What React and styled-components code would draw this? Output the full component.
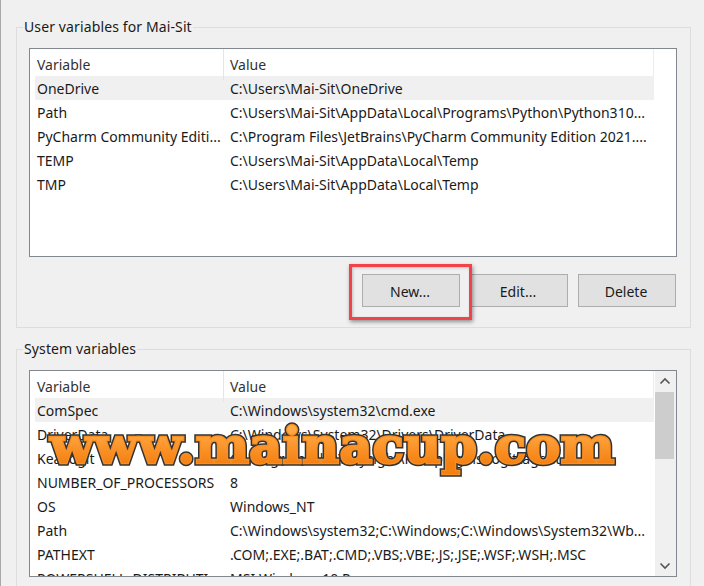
import styled, { createGlobalStyle } from 'styled-components'

const GlobalStyle = createGlobalStyle`
  html,
  body {
    margin: 0;
    height: 586px;
    overflow: hidden;
    background: #f0f0f0;
  }
`

const Page = styled.div`
  position: relative;
  width: 704px;
  height: 586px;
  overflow: hidden;
  padding: 19px 13px 0 16px;
  box-sizing: border-box;
  font-family: 'Noto Sans', 'Open Sans', sans-serif;
  font-size: 14px;
  color: #1a1a1a;
`

const WindowEdge = styled.div`
  position: absolute;
  left: 0;
  top: 0;
  bottom: 0;
  width: 1px;
  background: #a8a8a8;
`

const Group = styled.fieldset`
  margin: 0 0 ${(p) => p.$gap || 0}px;
  padding: ${(p) => p.$top}px 13px 0 12px;
  height: ${(p) => p.$height}px;
  box-sizing: border-box;
  border: 1px solid #dddddd;
  min-width: 0;
`

const Legend = styled.legend`
  margin-left: -6px;
  padding: 0 1px;
  font-size: 14px;
  line-height: 16px;
  letter-spacing: 0.12px;
`

const ListBox = styled.div`
  position: relative;
  height: ${(p) => p.$height}px;
  box-sizing: border-box;
  border: 1px solid #828790;
  background: #fff;
  overflow: hidden;
`

const HeaderRow = styled.div`
  display: grid;
  grid-template-columns: 189px 430px;
  margin-left: 5px;
  height: 27px;
  width: 619px;
  border-right: 1px solid #ececec;
  box-sizing: border-box;
`

const HeaderCell = styled.div`
  padding-left: ${(p) => (p.$last ? 6 : 2)}px;
  line-height: 31px;
  color: #333;
  border-right: ${(p) => (p.$last ? 'none' : '1px solid #e5e5e5')};
`

const Row = styled.div`
  display: grid;
  grid-template-columns: 193px 426px;
  width: 619px;
  margin-left: 5px;
  height: 24px;
  line-height: 26px;
  background: ${(p) => (p.$selected ? '#f0f0f0' : 'transparent')};
`

const Cell = styled.div`
  padding-left: 2px;
  white-space: nowrap;
  overflow: hidden;
`

const Buttons = styled.div`
  display: flex;
  justify-content: flex-end;
  gap: 10px;
  margin-top: 17px;
  padding-right: 1px;
`

const Button = styled.button`
  width: 98px;
  height: 33px;
  padding: 2px 2px 0 0;
  border: 1px solid #adadad;
  background: #e1e1e1;
  font: inherit;
  color: #1a1a1a;
`

const Highlight = styled.div`
  position: absolute;
  left: 349px;
  top: 264px;
  width: 123px;
  height: 56px;
  box-sizing: border-box;
  border: 3px solid #f2434a;
  box-shadow: 1px 2px 4px rgba(0, 0, 0, 0.4), inset 1px 1px 3px rgba(0, 0, 0, 0.2);
`

const Scrollbar = styled.div`
  position: absolute;
  right: 0;
  top: 0;
  bottom: 0;
  width: 21px;
  background: #f0f0f0;
  display: flex;
  flex-direction: column;
  align-items: center;
  justify-content: space-between;
`

const ScrollArrow = styled.svg`
  width: 21px;
  height: 20px;
  flex: none;
`

const ScrollThumb = styled.div`
  position: absolute;
  top: 21px;
  left: 0;
  width: 19px;
  height: 67px;
  background: #cdcdcd;
`

const Watermark = styled.div`
  position: absolute;
  left: 50px;
  top: 415px;
  font-family: 'DejaVu Serif', 'Liberation Serif', serif;
  font-weight: 900;
  font-size: 51px;
  line-height: 60px;
  letter-spacing: 0.2px;
  white-space: nowrap;

  &::before {
    content: attr(data-text);
    position: absolute;
    left: 0;
    top: 0;
    color: #333;
    -webkit-text-stroke: 5.5px #333;
  }

  &::after {
    content: attr(data-text);
    position: absolute;
    left: 0;
    top: 0;
    color: #f88f22;
    -webkit-text-stroke: 2.5px #f88f22;
  }
`

const WatermarkFill = styled.span`
  position: relative;
  z-index: 1;
  background: linear-gradient(180deg, #ffab45 25%, #f58012 80%);
  -webkit-background-clip: text;
  background-clip: text;
  color: transparent;
`

const userVars = [
  ['OneDrive', 'C:\\Users\\Mai-Sit\\OneDrive'],
  ['Path', 'C:\\Users\\Mai-Sit\\AppData\\Local\\Programs\\Python\\Python310...'],
  ['PyCharm Community Editi...', 'C:\\Program Files\\JetBrains\\PyCharm Community Edition 2021....'],
  ['TEMP', 'C:\\Users\\Mai-Sit\\AppData\\Local\\Temp'],
  ['TMP', 'C:\\Users\\Mai-Sit\\AppData\\Local\\Temp'],
]

const systemVars = [
  ['ComSpec', 'C:\\Windows\\system32\\cmd.exe'],
  ['DriverData', 'C:\\Windows\\System32\\Drivers\\DriverData'],
  ['KeaLogit', 'C:\\Program Files\\Keysight\\Kea\\plugins\\logit\\agent....'],
  ['NUMBER_OF_PROCESSORS', '8'],
  ['OS', 'Windows_NT'],
  ['Path', 'C:\\Windows\\system32;C:\\Windows;C:\\Windows\\System32\\Wb...'],
  ['PATHEXT', '.COM;.EXE;.BAT;.CMD;.VBS;.VBE;.JS;.JSE;.WSF;.WSH;.MSC'],
  ['POWERSHELL_DISTRIBUTI...', 'MSI:Windows 10 Pro'],
]

function VariableList({ rows, height, children }) {
  return (
    <ListBox $height={height}>
      <HeaderRow>
        <HeaderCell>Variable</HeaderCell>
        <HeaderCell $last>Value</HeaderCell>
      </HeaderRow>
      {rows.map(([name, value], i) => (
        <Row key={name} $selected={i === 0}>
          <Cell>{name}</Cell>
          <Cell>{value}</Cell>
        </Row>
      ))}
      {children}
    </ListBox>
  )
}

export default function App() {
  return (
    <Page>
      <GlobalStyle />
      <WindowEdge />
      <Group $height={309} $top={13} $gap={13}>
        <Legend>User variables for Mai-Sit</Legend>
        <VariableList rows={userVars} height={209} />
        <Buttons>
          <Button>New...</Button>
          <Button>Edit...</Button>
          <Button>Delete</Button>
        </Buttons>
      </Group>
      <Group $height={300} $top={13}>
        <Legend>System variables</Legend>
        <VariableList rows={systemVars} height={207}>
          <Scrollbar>
            <ScrollArrow viewBox="0 0 21 20">
              <path d="M5.5 12.5 10 8l4.500 4.500" fill="none" stroke="#555" strokeWidth="1.6" />
            </ScrollArrow>
            <ScrollThumb />
            <ScrollArrow viewBox="0 0 21 20">
              <path d="M5.500 7.500 10 12l4.500-4.500" fill="none" stroke="#555" strokeWidth="1.6" />
            </ScrollArrow>
          </Scrollbar>
        </VariableList>
      </Group>
      <Highlight />
      <Watermark data-text="www.mainacup.com">
        <WatermarkFill>www.mainacup.com</WatermarkFill>
      </Watermark>
    </Page>
  )
}
